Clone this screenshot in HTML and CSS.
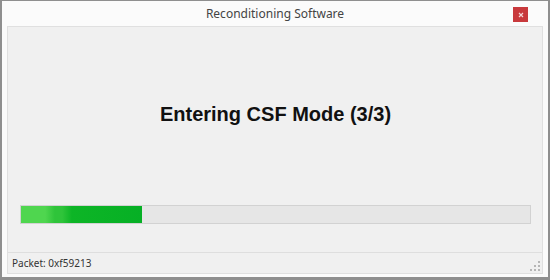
FILE: index.html
```html
<!DOCTYPE html>
<html lang="en">

<head>
    <meta charset="UTF-8">
    <title>Reconditioning Software</title>
    <link rel="stylesheet" href="styles.css">
</head>

<body>

    <div class="window">
        <div class="titlebar">
            <span class="title">Reconditioning Software</span>
            <span class="close">
                <svg width="6" height="6" viewBox="0 0 6 6">
                    <path d="M1 1 L5 5 M5 1 L1 5" stroke="#f4d6d6" stroke-width="1.2"></path>
                </svg>
            </span>
        </div>
        <div class="panel">
            <div class="main">
                <h1 class="heading">Entering CSF Mode (3/3)</h1>
                <div class="progress">
                    <div class="progress-fill" style="width: 121px"></div>
                </div>
            </div>
            <div class="statusbar">
                <span class="status-text">Packet: 0xf59213</span>
                <svg class="grip" width="10" height="10" viewBox="0 0 10 10">
                    <rect x="8" y="0" width="2" height="2" fill="#b5b5b5"></rect>
                    <rect x="4" y="4" width="2" height="2" fill="#b5b5b5"></rect>
                    <rect x="8" y="4" width="2" height="2" fill="#b5b5b5"></rect>
                    <rect x="0" y="8" width="2" height="2" fill="#b5b5b5"></rect>
                    <rect x="4" y="8" width="2" height="2" fill="#b5b5b5"></rect>
                    <rect x="8" y="8" width="2" height="2" fill="#b5b5b5"></rect>
                </svg>
            </div>
        </div>
    </div>

</body>

</html>
```

FILE: styles.css
```css
html,
body {
    margin: 0;
    padding: 0;
    background: #ffffff;
}

.window {
    box-sizing: border-box;
    width: 550px;
    height: 280px;
    border: 2px solid #8f8f8f;
    border-top-width: 1px;
    border-bottom-width: 3px;
    background: #fbfbfb;
    display: flex;
    flex-direction: column;
}

.titlebar {
    position: relative;
    height: 25px;
    display: flex;
    justify-content: center;
    align-items: center;
}

.title {
    font-family: "Noto Sans", sans-serif;
    font-size: 12px;
    color: #444444;
}

.close {
    position: absolute;
    right: 20px;
    top: 6px;
    width: 15px;
    height: 15px;
    background: #c8393c;
    display: flex;
    justify-content: center;
    align-items: center;
}

.panel {
    flex: 1;
    margin: 0 5px 3px 5px;
    border: 1px solid #e0e0e0;
    background: #f0f0f0;
    display: flex;
    flex-direction: column;
}

.main {
    flex: 1;
    padding: 75px 11px 0 12px;
}

.heading {
    margin: 0;
    text-align: center;
    font-family: "Liberation Sans", Arial, sans-serif;
    font-size: 20px;
    line-height: 24px;
    font-weight: bold;
    color: #111111;
}

.progress {
    margin-top: 79px;
    height: 17px;
    border: 1px solid #d2d2d2;
    background: #e6e6e6;
}

.progress-fill {
    height: 100%;
    background: linear-gradient(to right, #4fd64f 0%, #4fd64f 20%, #2fc43a 28%, #2fc43a 34%, #0db526 42%, #06b025 100%);
}

.statusbar {
    height: 20px;
    border-top: 1px solid #dedede;
    display: flex;
    align-items: center;
    justify-content: space-between;
    padding: 0 2px 0 4px;
}

.status-text {
    font-family: "Noto Sans", sans-serif;
    font-size: 10px;
    color: #333333;
}

.grip {
    align-self: flex-end;
    margin-bottom: 2px;
}
```
